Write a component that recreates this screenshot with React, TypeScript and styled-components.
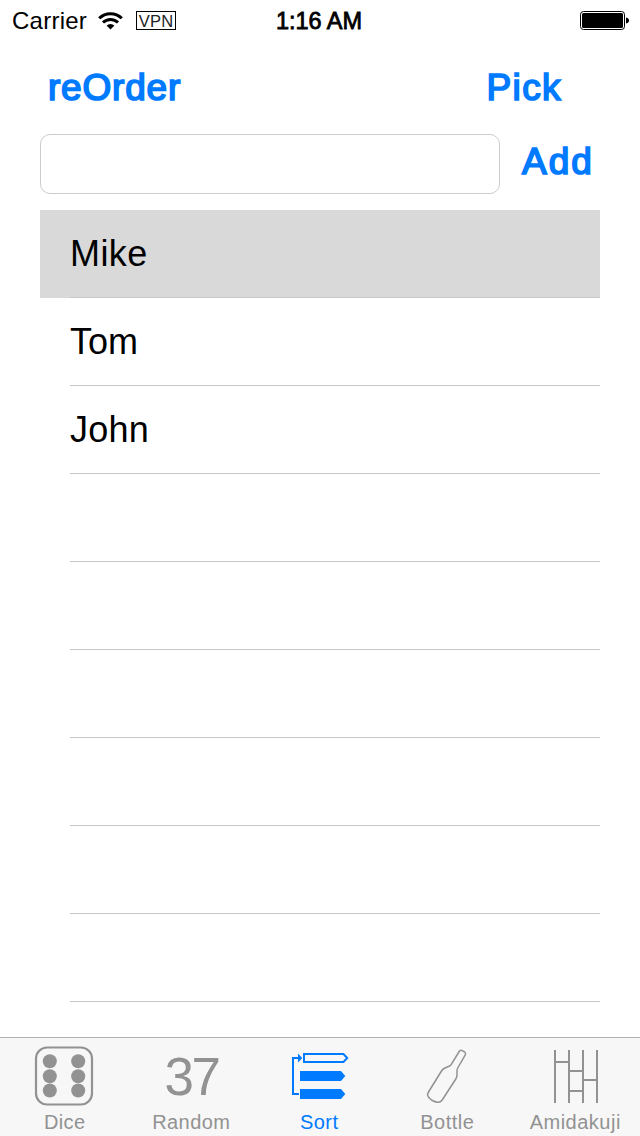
import React from 'react';
import styled, { createGlobalStyle } from 'styled-components';

const BLUE = '#007aff';
const GRAY = '#929292';

const GlobalStyle = createGlobalStyle`
  * { box-sizing: border-box; }
  body {
    margin: 0;
    background: #fff;
    color: #000;
    font-family: "Liberation Sans", Arial, sans-serif;
  }
`;

const Screen = styled.div`
  display: flex;
  flex-direction: column;
  width: 640px;
  height: 1136px;
  overflow: hidden;
`;

const StatusBar = styled.header`
  display: grid;
  grid-template-columns: 1fr auto 1fr;
  align-items: center;
  height: 40px;
  padding: 0 11px 0 12px;
  font-size: 24px;
  line-height: 40px;
`;

const StatusLeft = styled.div`
  display: flex;
  align-items: center;
`;

const Carrier = styled.span`
  width: 86px;
  letter-spacing: 0.25px;
  padding-top: 1px;
`;

const VpnBadge = styled.span`
  width: 40px;
  height: 19px;
  margin-left: 13px;
  border: 1px solid #000;
  color: #222;
  font-size: 16.5px;
  line-height: 18px;
  text-align: center;
  letter-spacing: 0.2px;
`;

const Clock = styled.time`
  margin-right: 3px;
  padding-top: 1px;
  font-size: 23.5px;
  -webkit-text-stroke: 0.8px #000;
`;

const StatusRight = styled.div`
  display: flex;
  justify-content: flex-end;
`;

const Actions = styled.div`
  display: flex;
  justify-content: space-between;
  height: 94px;
  padding: 27px 78px 0 48px;
`;

const TextButton = styled.button<{ $spacing?: number }>`
  height: 42px;
  padding: 0;
  border: 0;
  background: none;
  color: ${BLUE};
  font: 37px/42px "Liberation Sans", Arial, sans-serif;
  letter-spacing: ${(p) => p.$spacing ?? 0}px;
  -webkit-text-stroke: 1.7px ${BLUE};
`;

const EntryRow = styled.form`
  display: flex;
  gap: 22px;
  height: 76px;
  padding: 0 40px;
`;

const NameField = styled.input`
  width: 460px;
  height: 60px;
  padding: 0 14px;
  border: 1px solid #ccc;
  border-radius: 10px;
  background: #fff;
  font: 28px "Liberation Sans", Arial, sans-serif;
  outline: none;
`;

const AddSlot = styled.div`
  padding-top: 7px;
`;

const List = styled.ul`
  flex: 1;
  min-height: 0;
  overflow: hidden;
  margin: 0 40px;
  padding: 0;
  list-style: none;
`;

const Row = styled.li<{ $selected?: boolean }>`
  height: 88px;
  padding-left: 30px;
  background: ${(p) => (p.$selected ? '#d9d9d9' : 'transparent')};
`;

const RowContent = styled.div<{ $spacing?: number }>`
  height: 88px;
  border-bottom: 1px solid #c8c7cc;
  font-size: 36px;
  line-height: 87px;
  letter-spacing: ${(p) => p.$spacing ?? 0}px;
`;

const TabBar = styled.nav`
  display: grid;
  grid-template-columns: repeat(5, 128px);
  height: 99px;
  border-top: 1px solid #b2b2b2;
  background: #f7f7f7;
`;

const Tab = styled.a<{ $active?: boolean }>`
  display: flex;
  flex-direction: column;
  align-items: center;
  padding-top: 8px;
  color: ${(p) => (p.$active ? BLUE : GRAY)};
`;

const TabIcon = styled.svg`
  display: block;
  width: 128px;
  height: 64px;
`;

const BigNumber = styled.div`
  height: 64px;
  padding-right: 1px;
  font-size: 53px;
  line-height: 61px;
  letter-spacing: -2.4px;
`;

const TabLabel = styled.span<{ $spacing?: number; $shift?: number }>`
  padding-right: 1.5px;
  padding-left: ${(p) => p.$shift ?? 0}px;
  font-size: 20px;
  line-height: 24px;
  letter-spacing: ${(p) => p.$spacing ?? 0.4}px;
`;

const Wifi = () => (
  <svg width="25" height="18" viewBox="0 0 25 18" fill="none" stroke="#000" strokeWidth="3">
    <path d="M1.2 6.3a16 16 0 0 1 22.6 0" />
    <path d="M5 10.5a10.7 10.7 0 0 1 15 0" />
    <path d="M8.6 13.6a5.6 5.6 0 0 1 7.8 0L12.5 17.5z" fill="#000" stroke="none" />
  </svg>
);

const Battery = () => (
  <svg width="49" height="20" viewBox="0 0 49 20">
    <rect x="0.5" y="0.5" width="44" height="18" rx="3" fill="#fff" stroke="#000" />
    <rect x="2" y="2" width="41" height="15" rx="1.5" />
    <path d="M46 6.5c4 .5 4 5.5 0 6z" />
  </svg>
);

const DiceIcon = () => (
  <TabIcon viewBox="0 0 128 64">
    <rect x="36" y="1.5" width="56" height="57" rx="11" fill="none" stroke="currentColor" strokeWidth="2.2" />
    {[49.8, 78.2].map((x) =>
      [15.2, 30.2, 44.5].map((y) => <circle key={`${x}-${y}`} cx={x} cy={y} r="7" fill="currentColor" />),
    )}
  </TabIcon>
);

const SortIcon = () => (
  <TabIcon viewBox="0 0 128 64">
    <g fill="none" stroke="currentColor" strokeWidth="2">
      <path d="M48 8h39.5l3.7 4-3.7 4H48z" />
      <path d="M43 48H37V12h6" />
    </g>
    <g fill="currentColor">
      <path d="M42 7.500l4.300 4.500-4.300 4.500z" />
      <path d="M44 25h41l4.300 5-4.300 5H44z" />
      <path d="M44 43h41l4.300 5-4.300 5H44z" />
    </g>
  </TabIcon>
);

const BottleIcon = () => (
  <TabIcon viewBox="0 0 128 64">
    <path
      d="M75.5 5Q76.6 3.8 78.2 4.6L80.6 6Q82.2 7.2 81.3 8.8L73.7 22Q72.8 23.7 73 25.5L73 29Q73 31 71.8 33L58.2 54Q56.5 56.5 53.5 56.3Q51 56 47.5 54Q44.5 52 43.7 49.5Q43.3 48 44.5 46L57.5 25Q58.7 23 61 22L65.5 20Q66.7 19.3 67.3 18.3Z"
      fill="none"
      stroke="currentColor"
      strokeWidth="1.5"
      strokeLinejoin="round"
    />
  </TabIcon>
);

const AmidakujiIcon = () => (
  <TabIcon viewBox="0 0 128 64">
    <path
      d="M43 4v53M57 4v53M71 4v53M85 4v53M43 16h14M57 25h14M71 34h14M57 45h14"
      fill="none"
      stroke="currentColor"
      strokeWidth="2"
    />
  </TabIcon>
);

const names = [
  { name: 'Mike', spacing: 0.4 },
  { name: 'Tom', spacing: 0 },
  { name: 'John', spacing: 0.2 },
];
const emptyRows = [0, 1, 2, 3, 4, 5, 6];

export default function App() {
  return (
    <Screen>
      <GlobalStyle />
      <StatusBar>
        <StatusLeft>
          <Carrier>Carrier</Carrier>
          <Wifi />
          <VpnBadge>VPN</VpnBadge>
        </StatusLeft>
        <Clock>1:16 AM</Clock>
        <StatusRight>
          <Battery />
        </StatusRight>
      </StatusBar>
      <Actions>
        <TextButton $spacing={0.8}>reOrder</TextButton>
        <TextButton $spacing={1.4}>Pick</TextButton>
      </Actions>
      <EntryRow onSubmit={(e) => e.preventDefault()}>
        <NameField type="text" />
        <AddSlot>
          <TextButton type="submit" $spacing={2}>Add</TextButton>
        </AddSlot>
      </EntryRow>
      <List>
        {names.map(({ name, spacing }, i) => (
          <Row key={name} $selected={i === 0}>
            <RowContent $spacing={spacing}>{name}</RowContent>
          </Row>
        ))}
        {emptyRows.map((n) => (
          <Row key={n}>
            <RowContent />
          </Row>
        ))}
      </List>
      <TabBar>
        <Tab>
          <DiceIcon />
          <TabLabel $spacing={0.4} $shift={3}>Dice</TabLabel>
        </Tab>
        <Tab>
          <BigNumber>37</BigNumber>
          <TabLabel>Random</TabLabel>
        </Tab>
        <Tab $active>
          <SortIcon />
          <TabLabel>Sort</TabLabel>
        </Tab>
        <Tab>
          <BottleIcon />
          <TabLabel $spacing={0.5}>Bottle</TabLabel>
        </Tab>
        <Tab>
          <AmidakujiIcon />
          <TabLabel $spacing={0.5}>Amidakuji</TabLabel>
        </Tab>
      </TabBar>
    </Screen>
  );
}
